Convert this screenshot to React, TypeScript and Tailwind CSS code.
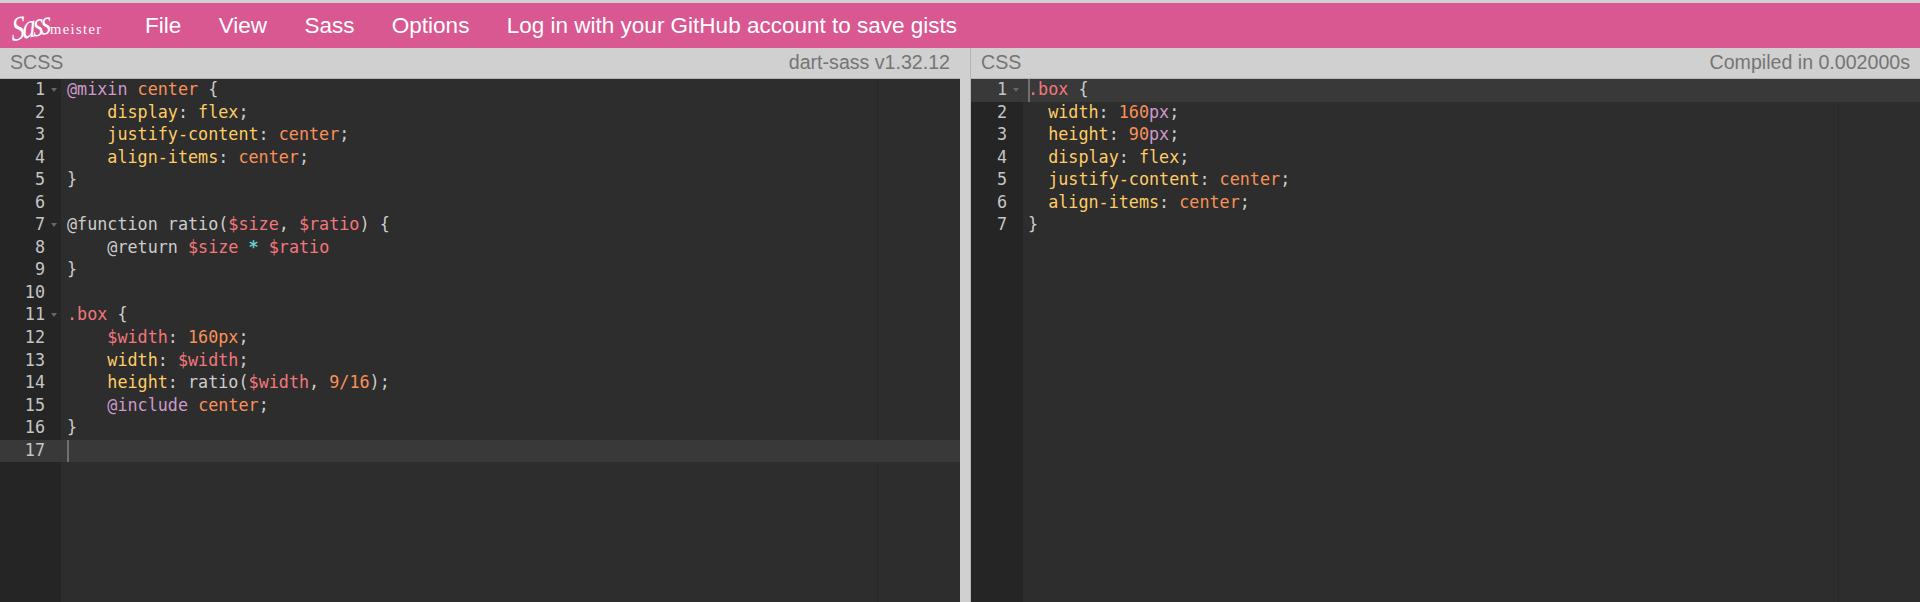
const P = "text-[#ffcc66]";
const O = "text-[#f99157]";
const V = "text-[#f2777a]";
const K = "text-[#cc99cc]";
const D = "text-[#cccccc]";
const C = "text-[#66cccc] font-bold";

type Token = [string, string];

const scss: Token[][] = [
  [["@mixin", K], [" ", D], ["center", O], [" {", D]],
  [["    ", D], ["display", P], [": ", D], ["flex", P], [";", D]],
  [["    ", D], ["justify-content", P], [": ", D], ["center", O], [";", D]],
  [["    ", D], ["align-items", P], [": ", D], ["center", O], [";", D]],
  [["}", D]],
  [],
  [["@function ratio(", D], ["$size", V], [", ", D], ["$ratio", V], [") {", D]],
  [["    @return ", D], ["$size", V], [" ", D], ["*", C], [" ", D], ["$ratio", V]],
  [["}", D]],
  [],
  [[".box", V], [" {", D]],
  [["    ", D], ["$width", V], [": ", D], ["160px", O], [";", D]],
  [["    ", D], ["width", P], [": ", D], ["$width", V], [";", D]],
  [["    ", D], ["height", P], [": ratio(", D], ["$width", V], [", ", D], ["9/16", O], [");", D]],
  [["    ", D], ["@include", K], [" ", D], ["center", O], [";", D]],
  [["}", D]],
  [],
];

const css: Token[][] = [
  [[".box", V], [" {", D]],
  [["  ", D], ["width", P], [": ", D], ["160", O], ["px", K], [";", D]],
  [["  ", D], ["height", P], [": ", D], ["90", O], ["px", K], [";", D]],
  [["  ", D], ["display", P], [": ", D], ["flex", P], [";", D]],
  [["  ", D], ["justify-content", P], [": ", D], ["center", O], [";", D]],
  [["  ", D], ["align-items", P], [": ", D], ["center", O], [";", D]],
  [["}", D]],
];

function Editor({
  lines,
  folds,
  active,
  gutter,
  pad,
  margin,
}: {
  lines: Token[][];
  folds: number[];
  active: number;
  gutter: string;
  pad: string;
  margin: string;
}) {
  return (
    <div className="relative flex-1 bg-[#2d2d2d] font-['DejaVu_Sans_Mono',monospace] text-[16.75px] leading-[21px]">
      <div className={`absolute top-0 bottom-0 w-px bg-[#272727] ${margin}`} />
      <div className={`absolute top-0 bottom-0 left-0 bg-[#252525] ${gutter}`} />
      <div className="relative">
        {lines.map((line, i) => (
          <div key={i} className={`flex h-[22.55px] ${i === active ? "bg-[#393939]" : ""}`}>
            <div className={`relative shrink-0 pr-4 text-right text-[#c5c5c5] ${gutter}`}>
              {i + 1}
              {folds.includes(i) && (
                <span className="absolute right-[4px] top-[9px] h-0 w-0 border-x-[3px] border-t-[4px] border-x-transparent border-t-[#666666]" />
              )}
            </div>
            <div className={`relative whitespace-pre ${pad}`}>
              {i === active && <span className="absolute top-0 left-0 h-[22.55px] w-[2px] bg-[#707070]" />}
              {line.map(([text, color], j) => (
                <span key={j} className={color}>
                  {text}
                </span>
              ))}
            </div>
          </div>
        ))}
      </div>
    </div>
  );
}

function PaneHeader({ left, right }: { left: string; right: string }) {
  return (
    <div className="flex h-[31px] items-center justify-between border-b border-[#b4b4b4] bg-[#d0d0d0] px-[10px] text-[19.6px] text-[#757575]">
      <span>{left}</span>
      <span>{right}</span>
    </div>
  );
}

export default function App() {
  return (
    <div className="flex h-[602px] w-[1920px] flex-col overflow-hidden bg-[#d0d0d0] font-['Liberation_Sans',Arial,sans-serif]">
      <nav className="mt-[3px] flex h-[45px] shrink-0 items-center bg-[#d95891] text-[22.5px] text-white">
        <div className="relative flex h-full w-[145px] shrink-0 items-center pl-[11px]">
          <span className="mr-[1px] -rotate-12 -skew-x-12 scale-y-125 font-['Liberation_Serif',serif] text-[27px] leading-[34px] tracking-[-2.5px] italic">
            Sass
          </span>
          <span className="mt-[8px] font-['Liberation_Serif',serif] text-[14.5px] leading-none tracking-[1.4px]">
            meister
          </span>
        </div>
        <div className="flex gap-[37.4px]">
          <span>File</span>
          <span>View</span>
          <span>Sass</span>
          <span>Options</span>
          <span>Log in with your GitHub account to save gists</span>
        </div>
      </nav>
      <div className="flex min-h-0 flex-1">
        <div className="flex w-[960px] flex-col">
          <PaneHeader left="SCSS" right="dart-sass v1.32.12" />
          <Editor lines={scss} folds={[0, 6, 10]} active={16} gutter="w-[61px]" pad="ml-[6px]" margin="left-[877px]" />
        </div>
        <div className="w-[10px] bg-[#d0d0d0]" />
        <div className="flex flex-1 flex-col border-l border-[#b4b4b4]">
          <PaneHeader left="CSS" right="Compiled in 0.002000s" />
          <Editor lines={css} folds={[0]} active={0} gutter="w-[52px]" pad="ml-[5px]" margin="left-[867px]" />
        </div>
      </div>
    </div>
  );
}
